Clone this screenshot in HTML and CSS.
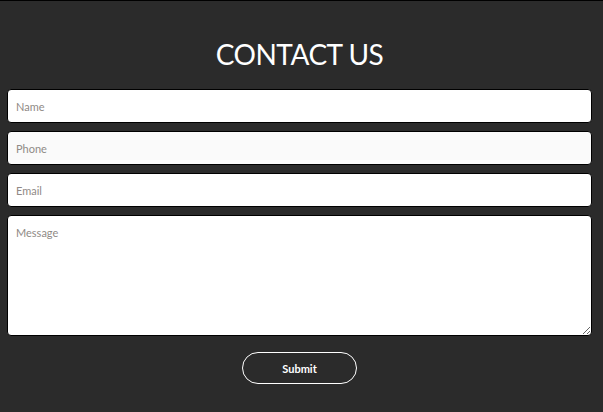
FILE: index.html
```html
<!DOCTYPE html>
<html lang="en">
<head>
    <meta charset="UTF-8">
    <title>Contact Us</title>
    <link rel="stylesheet" href="styles.css">
</head>
<body>
<div class="contact">
    <h2>CONTACT US</h2>
    <form class="contact-form" autocomplete="off">
        <input type="text" placeholder="Name">
        <input type="text" class="phone" placeholder="Phone">
        <input type="text" placeholder="Email">
        <textarea placeholder="Message"></textarea>
        <div class="submit-row">
            <button type="submit">Submit</button>
        </div>
    </form>
</div>
</body>
</html>
```

FILE: styles.css
```css
html, body {
    margin: 0;
    height: 100%;
}
body {
    background: #2b2b2b;
    border-top: 1px solid #000;
    box-sizing: border-box;
    font-family: Lato, "Open Sans", sans-serif;
}
.contact {
    padding: 0 11px 0 7px;
}
h2 {
    margin: 0;
    padding-top: 36px;
    height: 52px;
    text-align: center;
    color: #fff;
    font-weight: 400;
    font-size: 28px;
    line-height: 34px;
    letter-spacing: -0.5px;
}
.contact-form {
    display: flex;
    flex-direction: column;
    gap: 8px;
}
.contact-form input,
.contact-form textarea {
    box-sizing: border-box;
    width: 100%;
    border: 1px solid #000;
    border-radius: 4px;
    background: #fff;
    font-family: inherit;
    font-size: 11px;
    padding: 0 8px;
    outline: none;
}
.contact-form input {
    height: 34px;
}
.contact-form .phone {
    background: #fafafa;
}
.contact-form textarea {
    height: 121px;
    padding-top: 10px;
    resize: vertical;
}
.contact-form ::placeholder {
    color: #8f8a86;
}
.submit-row {
    display: flex;
    justify-content: center;
    padding-top: 8px;
}
.submit-row button {
    width: 115px;
    height: 32px;
    border: 1px solid #fff;
    border-radius: 16px;
    background: transparent;
    color: #fff;
    font-family: inherit;
    font-size: 11px;
    font-weight: 700;
    cursor: pointer;
}
```
